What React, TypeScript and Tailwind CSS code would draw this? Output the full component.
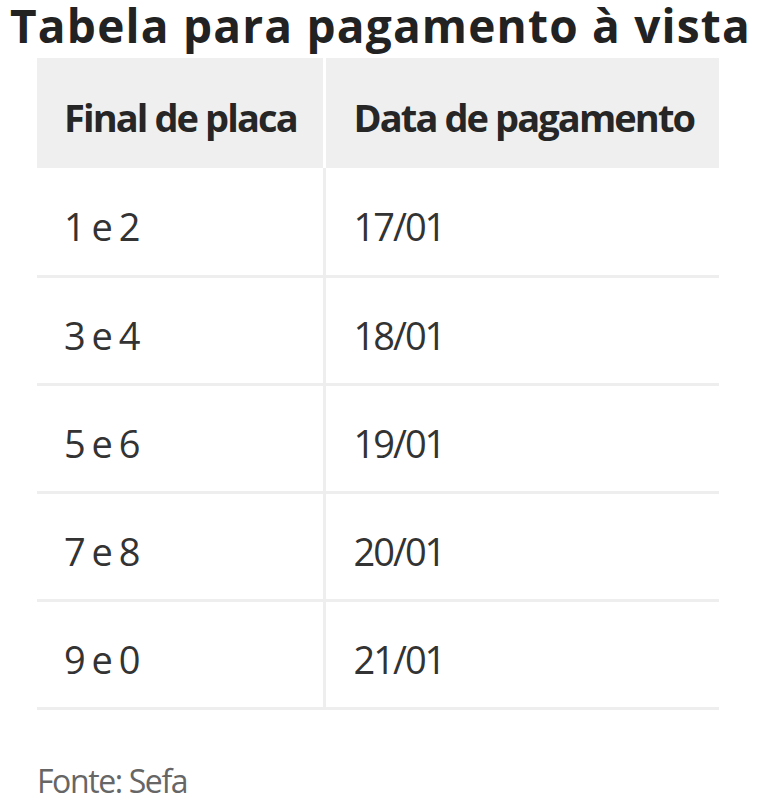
const rows = [
  ['1 e 2', '17/01'],
  ['3 e 4', '18/01'],
  ['5 e 6', '19/01'],
  ['7 e 8', '20/01'],
  ['9 e 0', '21/01'],
];

export default function App() {
  return (
    <div className="h-[800px] w-[765px] overflow-hidden bg-white font-['Open_Sans',sans-serif] text-[#333]">
      <h1 className="-mt-[6px] ml-[10px] text-[46px] leading-[62px] font-bold tracking-[1.2px] whitespace-nowrap text-[#222]">
        Tabela para pagamento à vista
      </h1>
      <table className="mt-[2px] ml-[37px] w-[682px] border-collapse">
        <thead>
          <tr className="h-[110px] bg-[#efefef]">
            <th className="w-[287px] border-r-[3px] border-white pt-[8px] pl-[27px] text-left text-[38px] font-bold tracking-[-1.9px] text-[#262626]">
              Final de placa
            </th>
            <th className="pt-[8px] pl-[28px] text-left text-[38px] font-bold tracking-[-1.9px] text-[#262626]">
              Data de pagamento
            </th>
          </tr>
        </thead>
        <tbody>
          {rows.map(([a, b]) => (
            <tr key={a} className="h-[108px] border-b-[3px] border-[#eeeeee]">
              <td className="border-r-[3px] border-[#eeeeee] pt-[10px] pl-[27px] text-[38px] tracking-[-2px] text-[#333]">
                {a}
              </td>
              <td className="pt-[10px] pl-[28px] text-[38px] tracking-[-2px] text-[#333]">{b}</td>
            </tr>
          ))}
        </tbody>
      </table>
      <p className="mt-[50px] ml-[37px] text-[32px] leading-[42px] tracking-[-1.4px] text-[#666]">
        Fonte: Sefa
      </p>
    </div>
  );
}
